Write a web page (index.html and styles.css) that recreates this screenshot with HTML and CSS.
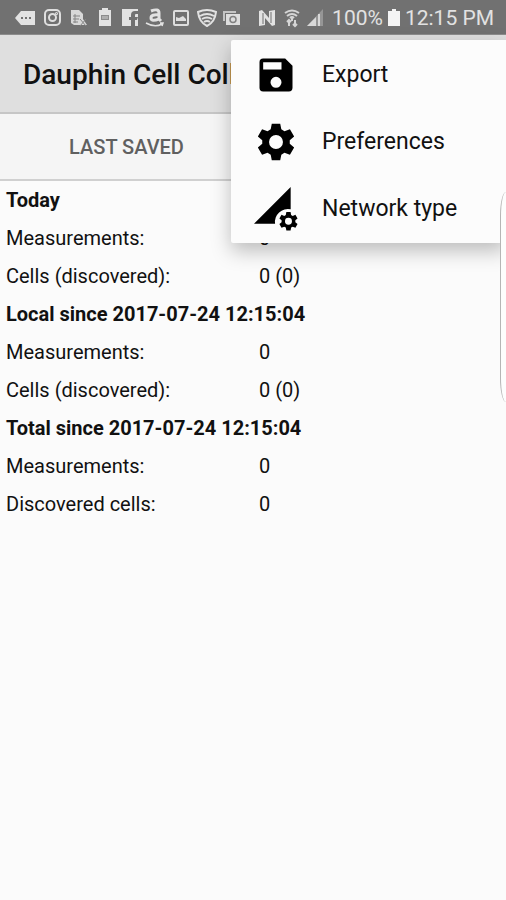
FILE: index.html
```html
<!DOCTYPE html>
<html lang="en">
<head>
    <meta charset="utf-8">
    <meta name="viewport" content="width=device-width, initial-scale=1">
    <title>Dauphin Cell Collector</title>
    <link rel="stylesheet" href="styles.css">
</head>
<body>
    <div class="status-bar">
        <div class="notifications">
            <svg viewBox="0 0 20 20"><path fill="#e2e2e2" d="M6 3h14v14H6L0 10z"/><path fill="#717171" d="M6 9h2v2H6zM10 9h2v2h-2zM14 9h2v2h-2z"/></svg>
            <svg viewBox="0 0 20 20" fill="none" stroke="#dedede" stroke-width="2"><rect x="4" y="2" width="15" height="15" rx="4"/><circle cx="11.500" cy="9.500" r="3.500"/><circle cx="15.500" cy="5.500" r=".5"/></svg>
            <svg viewBox="0 0 20 20"><path fill="#d8d8d8" d="M4 2h8l4 4v5l4 6H7l-3-2z"/><path fill="none" stroke="#858585" d="M6 8h7M6 11h6M6 14h5M8 6v9M13 11l6 7M19 11l-6 7"/></svg>
            <svg viewBox="0 0 20 20"><path fill="#e2e2e2" d="M9 0h6v2h3v16H6V2h3z"/><path fill="#8c8c8c" d="M8 7h8v5H8z"/><path stroke="#d0d0d0" d="M10 8v3M12 8v3M14 8v3"/></svg>
            <svg viewBox="0 0 20 20"><path fill="#e2e2e2" d="M3 1h16v17h-3v-6h2l1-3h-3V7q0-1 1-1h2V3h-3q-4 0-4 4v2h-2v3h2v6H3z"/></svg>
            <svg viewBox="0 0 20 20" fill="none" stroke="#e2e2e2"><path stroke-width="3" d="M6 3q8-3 8 2v6l2 2M14 7Q6 6 6 10t8 1"/><path stroke-width="1.500" d="M1 15q9 5 16 1M15 15h3l-1 3"/></svg>
            <svg viewBox="0 0 20 20"><rect x="3" y="3" width="14" height="14" rx="1" fill="none" stroke="#dedede" stroke-width="2"/><path fill="#dedede" d="M5 13V9l3 1 4-2 3 3v2z"/></svg>
            <svg viewBox="0 0 20 20" fill="none" stroke="#e2e2e2" stroke-width="2"><path d="M1 4q9-4 18 0-1 10-9 14Q2 14 1 4zM3 8q7-4 14 0M5 11q5-3 10 0M7 14q3-2 6 0"/></svg>
            <svg viewBox="0 0 20 20"><path fill="#c4c4c4" d="M0 3h13v2H2v8H0z"/><path fill="#dedede" d="M3 6h14v11H3z"/><circle cx="10" cy="11.500" r="3" fill="none" stroke="#818181" stroke-width="1.500"/></svg>
        </div>
        <div class="system">
            <svg viewBox="0 0 20 20"><path fill="#e2e2e2" d="M2 3l3-1 7 8V3l6-1v15l-3 1-7-8v7l-6 1z"/><path stroke="#717171" d="M6 5v11M14 4v11"/></svg>
            <svg viewBox="0 0 20 20" fill="none" stroke="#d5d5d5" stroke-width="2"><path d="M3 5q7-5 14 0M5 8q5-4 10 0M8 10q2-2 4 0M10 10v3M7 12v6M5 14l2-2 2 2M13 12v6M11 16l2 2 2-2"/></svg>
            <svg viewBox="0 0 20 20"><path fill="#969696" d="M16 1v17H0z"/><path fill="#d9d9d9" d="M9 9v9H0zM11 6h2v12h-2z"/></svg>
            <span>100%</span>
            <svg class="battery" viewBox="0 0 12 20"><path fill="#f4f4f4" d="M4 1h4v2h4v15H0V3h4z"/></svg>
            <span class="clock">12:15 PM</span>
        </div>
    </div>

    <header class="toolbar">
        <h1>Dauphin Cell Collector</h1>
        <nav class="menu">
            <button type="button" class="menu-item">
                <svg viewBox="0 0 24 24"><path d="M17 3H5a2 2 0 0 0-2 2v14a2 2 0 0 0 2 2h14a2 2 0 0 0 2-2V7l-4-4zm-5 16a3 3 0 1 1 0-6 3 3 0 0 1 0 6zm3-10H5V5h10v4z"/></svg>
                Export
            </button>
            <button type="button" class="menu-item">
                <svg viewBox="0 0 24 24"><path fill-rule="evenodd" d="M9.700 2h4.600l.6 3.100 1.700 1 3-1.100 2.300 4-2.400 2v2l2.400 2-2.300 4-3-1.100-1.700 1-.6 3.100H9.700l-.6-3.100-1.700-1-3 1.100-2.300-4 2.400-2v-2l-2.400-2 2.300-4 3 1.100 1.700-1zM12 8.200a3.800 3.800 0 1 0 0 7.600 3.800 3.800 0 0 0 0-7.600z"/></svg>
                Preferences
            </button>
            <button type="button" class="menu-item">
                <svg viewBox="0 0 24 24"><path d="M20 0v12.200a7 7 0 0 0-8.500 7.800H0z"/><g transform="translate(12.800 12.700) scale(.5)"><path fill-rule="evenodd" d="M9.700 2h4.600l.6 3.100 1.700 1 3-1.100 2.300 4-2.400 2v2l2.400 2-2.300 4-3-1.100-1.700 1-.6 3.100H9.700l-.6-3.100-1.700-1-3 1.100-2.300-4 2.400-2v-2l-2.400-2 2.300-4 3 1.100 1.700-1zM12 8.200a3.800 3.800 0 1 0 0 7.600 3.800 3.800 0 0 0 0-7.600z"/></g></svg>
                Network type
            </button>
        </nav>
    </header>

    <div class="tabs">
        <button type="button" class="tab">LAST SAVED</button>
        <button type="button" class="tab" aria-label="Statistics"></button>
    </div>

    <main>
        <table class="stats">
            <tbody>
                <tr><th colspan="2">Today</th></tr>
                <tr><td>Measurements:</td><td>0</td></tr>
                <tr><td>Cells (discovered):</td><td>0 (0)</td></tr>
            </tbody>
            <tbody>
                <tr><th colspan="2">Local since 2017-07-24 12:15:04</th></tr>
                <tr><td>Measurements:</td><td>0</td></tr>
                <tr><td>Cells (discovered):</td><td>0 (0)</td></tr>
            </tbody>
            <tbody>
                <tr><th colspan="2">Total since 2017-07-24 12:15:04</th></tr>
                <tr><td>Measurements:</td><td>0</td></tr>
                <tr><td>Discovered cells:</td><td>0</td></tr>
            </tbody>
        </table>
    </main>

    <div class="edge-handle"></div>
</body>
</html>
```
FILE: styles.css
```css
* {
    box-sizing: border-box;
}

body {
    position: relative;
    min-height: 100vh;
    margin: 0;
    font-family: Roboto, sans-serif;
    background-color: #fbfbfb;
    color: #111111;
}

button {
    border: none;
    background: none;
    font-family: inherit;
    cursor: pointer;
}

.status-bar {
    display: flex;
    align-items: center;
    justify-content: space-between;
    height: 35px;
    padding: 2px 12px 0 15px;
    background-color: #717171;
    border-bottom: 1px solid #8c8c8c;
    color: #e2e2e2;
    font-size: 21px;
}

.status-bar svg {
    width: 20px;
    height: 20px;
}

.notifications {
    display: flex;
    gap: 6px;
}

.system {
    display: flex;
    align-items: center;
    gap: 5px;
}

.system .battery {
    width: 12px;
}

.toolbar {
    position: relative;
    display: flex;
    align-items: center;
    height: 79px;
    padding: 2px 23px 0;
    background-color: #dfdfdf;
    border-bottom: 2px solid #c6c6c6;
}

h1 {
    margin: 0;
    font-size: 28px;
    font-weight: 500;
    white-space: nowrap;
}

.menu {
    position: absolute;
    top: 5px;
    right: 0;
    z-index: 1;
    width: 275px;
    padding: 1px 0;
    background-color: #fcfcfc;
    border-radius: 2px 0 0 2px;
    box-shadow: 0 8px 20px rgba(0, 0, 0, 0.25);
}

.menu-item {
    display: flex;
    align-items: center;
    gap: 24px;
    width: 100%;
    height: 67px;
    padding: 0 23px;
    color: #111111;
    font-size: 23px;
}

.menu-item svg {
    width: 44px;
    height: 44px;
    overflow: visible;
    fill: #000000;
}

.tabs {
    display: flex;
    height: 67px;
    background-color: #f5f5f5;
    border-bottom: 2px solid #d0d0d0;
}

.tab {
    flex: 1;
    color: #606060;
    font-size: 20px;
    font-weight: 500;
}

.stats {
    width: 100%;
    border-collapse: collapse;
    table-layout: fixed;
    font-size: 20px;
}

.stats th,
.stats td {
    height: 38px;
    padding: 0 6px;
    text-align: left;
}

/* edge panel handle on the right side of the screen */
.edge-handle {
    position: absolute;
    top: 192px;
    right: 0;
    z-index: 2;
    width: 6px;
    height: 210px;
    background-color: #fdfdfd;
    border: 1px solid #b5b5b5;
    border-width: 0 0 0 1px;
    border-radius: 6px 0 0 6px / 24px 0 0 24px;
}
```
